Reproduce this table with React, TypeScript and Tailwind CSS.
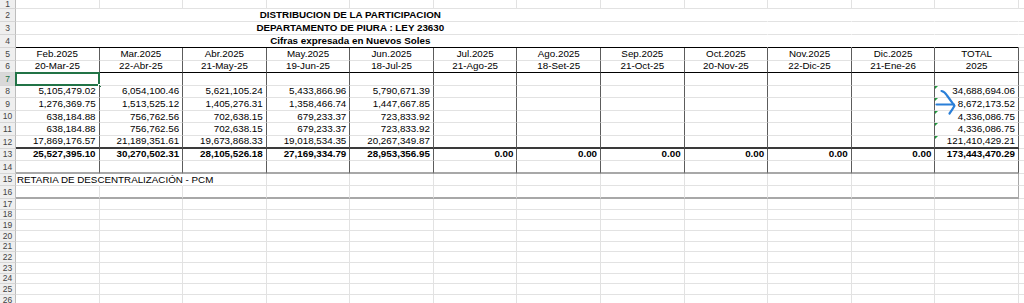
import React from 'react';

const months = ['Feb.2025', 'Mar.2025', 'Abr.2025', 'May.2025', 'Jun.2025', 'Jul.2025', 'Ago.2025', 'Sep.2025', 'Oct.2025', 'Nov.2025', 'Dic.2025', 'TOTAL'];
const dates = ['20-Mar-25', '22-Abr-25', '21-May-25', '19-Jun-25', '18-Jul-25', '21-Ago-25', '18-Set-25', '21-Oct-25', '20-Nov-25', '22-Dic-25', '21-Ene-26', '2025'];

const values: Record<number, string[]> = {
  8: ['5,105,479.02', '6,054,100.46', '5,621,105.24', '5,433,866.96', '5,790,671.39', '', '', '', '', '', '', '34,688,694.06'],
  9: ['1,276,369.75', '1,513,525.12', '1,405,276.31', '1,358,466.74', '1,447,667.85', '', '', '', '', '', '', '8,672,173.52'],
  10: ['638,184.88', '756,762.56', '702,638.15', '679,233.37', '723,833.92', '', '', '', '', '', '', '4,336,086.75'],
  11: ['638,184.88', '756,762.56', '702,638.15', '679,233.37', '723,833.92', '', '', '', '', '', '', '4,336,086.75'],
  12: ['17,869,176.57', '21,189,351.61', '19,673,868.33', '19,018,534.35', '20,267,349.87', '', '', '', '', '', '', '121,410,429.21'],
  13: ['25,527,395.10', '30,270,502.31', '28,105,526.18', '27,169,334.79', '28,953,356.95', '0.00', '0.00', '0.00', '0.00', '0.00', '0.00', '173,443,470.29'],
};

const titles: Record<number, string> = {
  2: 'DISTRIBUCION DE LA PARTICIPACION',
  3: 'DEPARTAMENTO DE PIURA : LEY 23630',
  4: 'Cifras expresada en Nuevos Soles',
};

function rowHeight(r: number) {
  if (r === 1) return 'h-[9px]';
  if (r <= 4) return 'h-[13px]';
  if (r <= 6) return 'h-[12.5px]';
  if (r <= 16) return 'h-[12.6px]';
  return 'h-[10.7px]';
}

function bottomBorder(r: number) {
  if (r === 4 || r === 6) return 'border-b border-b-black';
  if (r === 12) return 'border-b-2 border-b-[#3a3a3a]';
  if (r === 14 || r === 16) return 'border-b-2 border-b-[#a8a8a8]';
  return 'border-b border-b-[#e2e2e2]';
}

function rightBorder(r: number, c: number) {
  if (r >= 2 && r <= 4) return 'border-r border-r-transparent';
  if (r >= 5 && r <= 14) return 'border-r border-r-[#5c5c5c]';
  if (r === 15 && c < 2) return 'border-r border-r-transparent';
  if ((r === 15 || r === 16) && c === 11) return 'border-r border-r-[#a8a8a8]';
  return 'border-r border-r-[#e2e2e2]';
}

function RowHeader({ r }: { r: number }) {
  const selected = r === 7;
  return (
    <div
      className={`w-[16px] shrink-0 flex items-center justify-center border-r border-r-[#bdbdbd] border-b border-b-[#d6d6d6] text-[8.5px] ${
        selected ? 'bg-[#d9d9d9] text-[#217346]' : 'bg-[#efefef] text-[#444]'
      }`}
    >
      {r}
    </div>
  );
}

function Cell({ r, c }: { r: number; c: number }) {
  let content: React.ReactNode = null;
  let align = 'justify-end pr-[3px]';
  let weight = '';
  if (r === 5) {
    content = months[c];
    align = 'justify-center';
  } else if (r === 6) {
    content = dates[c];
    align = 'justify-center';
  } else if (values[r]) {
    content = values[r][c];
    if (r === 13) weight = 'font-bold';
  } else if (r === 15 && c === 0) {
    content = 'RETARIA DE DESCENTRALIZACIÓN - PCM';
    align = 'justify-start pl-[1px]';
  }

  const marker = c === 11 && r >= 8 && r <= 12;
  const selected = r === 7 && c === 0;

  return (
    <div
      className={`relative w-[83.58px] shrink-0 flex items-center whitespace-nowrap ${align} ${weight} ${rightBorder(r, c)} ${bottomBorder(r)}`}
    >
      {content}
      {marker && (
        <span className="absolute left-0 top-0 w-0 h-0 border-t-[3px] border-t-[#1f9a3c] border-r-[3px] border-r-transparent" />
      )}
      {selected && (
        <>
          <span className="absolute -left-[1px] -top-[1px] -right-[1px] -bottom-[1px] border-2 border-[#217346]" />
          <span className="absolute -right-[3px] -bottom-[3px] w-[4px] h-[4px] bg-[#217346] border border-white" />
        </>
      )}
    </div>
  );
}

function Row({ r }: { r: number }) {
  if (titles[r]) {
    return (
      <div className={`flex ${rowHeight(r)}`}>
        <RowHeader r={r} />
        <div className={`w-[668.64px] shrink-0 flex items-center justify-center font-bold whitespace-nowrap ${bottomBorder(r)}`}>
          {titles[r]}
        </div>
        {[8, 9, 10, 11].map((c) => (
          <Cell key={c} r={r} c={c} />
        ))}
        <div className={`flex-1 ${bottomBorder(r === 4 ? 0 : r)}`} />
      </div>
    );
  }
  return (
    <div className={`flex ${rowHeight(r)}`}>
      <RowHeader r={r} />
      {Array.from({ length: 12 }, (_, c) => (
        <Cell key={c} r={r} c={c} />
      ))}
      <div className="flex-1 border-b border-b-[#e2e2e2]" />
    </div>
  );
}

export default function App() {
  const rows = Array.from({ length: 26 }, (_, i) => i + 1);
  return (
    <div className="relative w-[1024px] h-[303px] overflow-hidden bg-white text-black text-[9.8px] leading-none font-['Liberation_Sans',Arial,sans-serif]">
      {rows.map((r) => (
        <Row key={r} r={r} />
      ))}
      <svg className="absolute left-[935px] top-[86px]" width="24" height="32" viewBox="0 0 24 32" fill="none">
        <path d="M1.5 18.5 L19 18.5" stroke="#2a7fd8" strokeWidth="2.2" strokeLinecap="round" />
        <path d="M6.5 5 Q9.5 5.5 12 9.5 L19.5 19.8 Q17.5 23.5 14.5 27.5" stroke="#2a7fd8" strokeWidth="2.2" strokeLinecap="round" strokeLinejoin="round" />
      </svg>
    </div>
  );
}
